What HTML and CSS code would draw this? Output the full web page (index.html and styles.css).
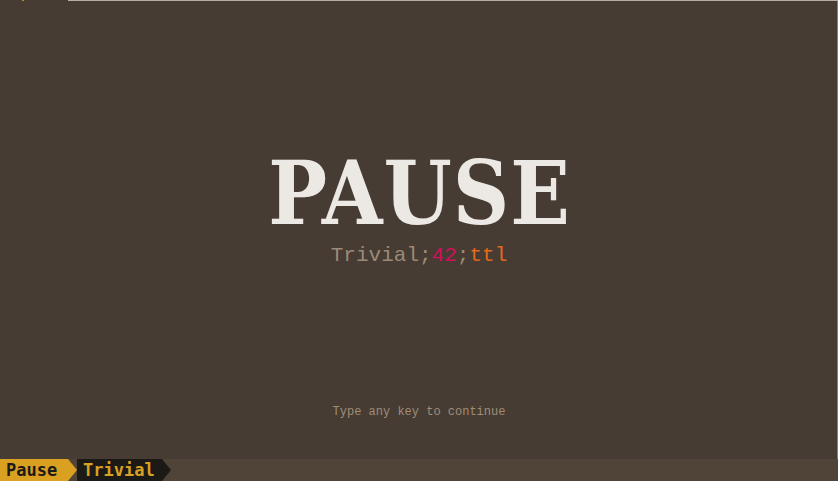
FILE: index.html
```html
<!DOCTYPE html>
<html>
<head>
<meta charset="utf-8">
<link rel="stylesheet" href="styles.css">
</head>
<body>
<div class="screen">
  <div class="topline"><span class="dot"></span><span class="gap"></span><span class="rule"></span></div>
  <main class="main">
    <h1 class="title">PAUSE</h1>
    <div class="subtitle"><span class="name">Trivial;</span><span class="num">42</span><span class="name">;</span><span class="ttl">ttl</span></div>
    <div class="hint">Type any key to continue</div>
  </main>
  <footer class="status">
    <div class="seg seg-mode">Pause</div>
    <div class="seg seg-name">Trivial</div>
  </footer>
</div>
</body>
</html>
```
FILE: styles.css
```css
html, body {
  margin: 0;
  padding: 0;
  background: #463c33;
}
.screen {
  width: 838px;
  height: 481px;
  display: flex;
  flex-direction: column;
  overflow: hidden;
  box-shadow: inset -1px 0 0 #8a8178;
}
.topline {
  display: flex;
  height: 1px;
  flex: none;
}
.topline .dot {
  width: 2px;
  margin-left: 22px;
  background: #b88a2a;
}
.topline .gap {
  width: 44px;
}
.topline .rule {
  flex: 1;
  background: #b5afa8;
}
.main {
  flex: 1;
  display: flex;
  flex-direction: column;
  align-items: center;
  padding-top: 153px;
}
.title {
  margin: 0;
  font-family: "DejaVu Serif", serif;
  font-stretch: condensed;
  font-weight: bold;
  font-size: 87px;
  line-height: 80px;
  color: #ece9e4;
  letter-spacing: 1px;
  margin-right: -1px;
}
.subtitle {
  margin-top: 10px;
  font-family: "Liberation Mono", monospace;
  font-size: 21px;
  line-height: 24px;
}
.subtitle .name { color: #9c8a78; }
.subtitle .num { color: #d0105a; }
.subtitle .ttl { color: #e36a1a; }
.hint {
  margin-top: 137px;
  font-family: "Liberation Mono", monospace;
  font-size: 12px;
  line-height: 14px;
  color: #a08c78;
}
.status {
  flex: none;
  height: 22px;
  background: #504438;
  display: flex;
  align-items: stretch;
}
.seg {
  position: relative;
  font-family: "DejaVu Sans Mono", monospace;
  font-weight: bold;
  font-size: 17px;
  line-height: 22px;
}
.seg::after {
  content: "";
  position: absolute;
  top: 0;
  right: -9px;
  border-top: 11px solid transparent;
  border-bottom: 11px solid transparent;
  border-left: 9px solid currentColor;
}
.seg-mode {
  background: #d9a021;
  color: #1c1a17;
  padding: 0 10px 0 6px;
  width: 52px;
}
.seg-mode::after { border-left-color: #d9a021; }
.seg-name {
  background: #1c1a17;
  color: #d9a021;
  margin-left: 9px;
  padding: 0 6px 0 6px;
  width: 73px;
  z-index: 0;
}
.seg-name::after { border-left-color: #1c1a17; }
```
